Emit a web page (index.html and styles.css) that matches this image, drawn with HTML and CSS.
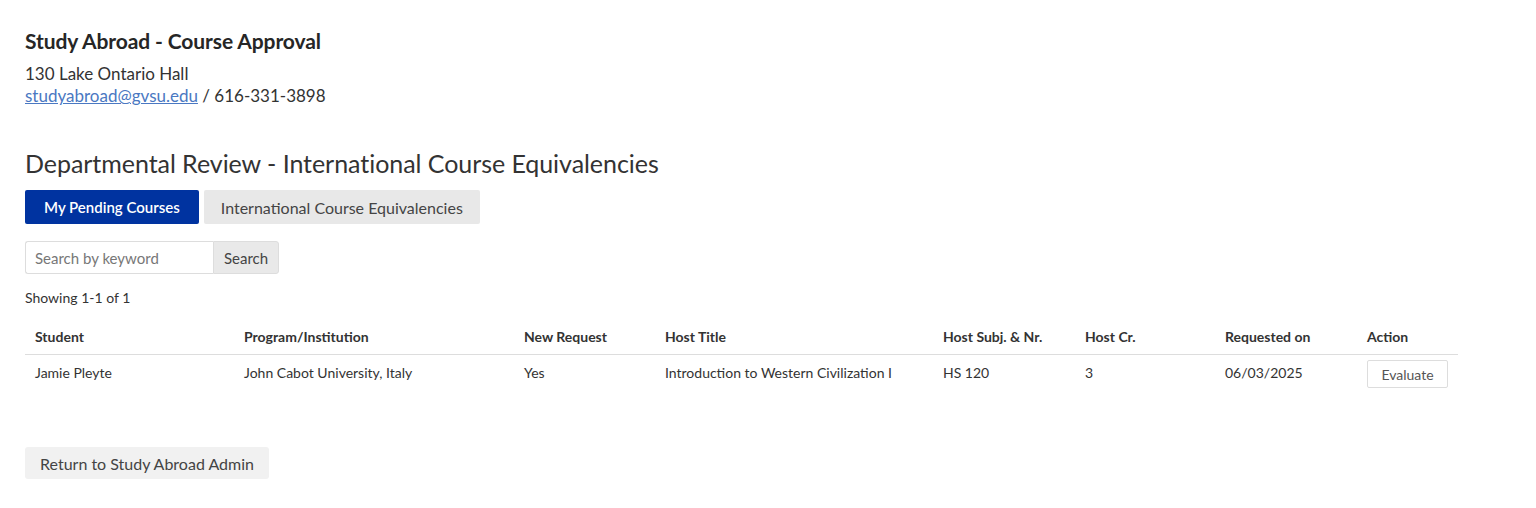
FILE: index.html
```html
<!DOCTYPE html>
<html lang="en">
<head>
<meta charset="utf-8">
<title>Study Abroad - Course Approval</title>
<link rel="stylesheet" href="styles.css">
</head>
<body>
<div class="page">
  <h1 class="title">Study Abroad - Course Approval</h1>
  <div class="address">
    <div>130 Lake Ontario Hall</div>
    <div><a href="#" class="link">studyabroad@gvsu.edu</a> / 616-331-3898</div>
  </div>
  <h2 class="heading">Departmental Review - International Course Equivalencies</h2>
  <div class="tabs">
    <a href="#" class="tab tab-active">My Pending Courses</a>
    <a href="#" class="tab">International Course Equivalencies</a>
  </div>
  <form class="search">
    <input class="search-input" type="text" placeholder="Search by keyword">
    <button class="search-btn" type="button">Search</button>
  </form>
  <div class="showing">Showing 1-1 of 1</div>
  <table class="grid">
    <colgroup>
      <col style="width:209px"><col style="width:280px"><col style="width:141px"><col style="width:278px">
      <col style="width:142px"><col style="width:140px"><col style="width:142px"><col style="width:101px">
    </colgroup>
    <thead>
      <tr>
        <th>Student</th><th>Program/Institution</th><th>New Request</th><th>Host Title</th>
        <th>Host Subj. &amp; Nr.</th><th>Host Cr.</th><th>Requested on</th><th>Action</th>
      </tr>
    </thead>
    <tbody>
      <tr>
        <td>Jamie Pleyte</td><td>John Cabot University, Italy</td><td>Yes</td><td>Introduction to Western Civilization I</td>
        <td>HS 120</td><td>3</td><td>06/03/2025</td><td class="action"><button class="eval-btn" type="button">Evaluate</button></td>
      </tr>
    </tbody>
  </table>
  <button class="return-btn" type="button">Return to Study Abroad Admin</button>
</div>
</body>
</html>
```

FILE: styles.css
```css
* { box-sizing: border-box; }
body {
  margin: 0;
  background: #fff;
  color: #333;
  font-family: "Source Sans Pro", Lato, "Liberation Sans", sans-serif;
}
.page {
  padding: 27px 25px 0 25px;
}
.title {
  margin: 0;
  font-size: 21px;
  line-height: 28px;
  font-weight: 700;
  color: #262626;
  letter-spacing: -0.1px;
}
.address {
  margin-top: 8px;
  font-size: 17px;
  line-height: 22px;
  color: #333;
}
.link {
  color: #4a78c2;
  text-decoration: underline;
}
.heading {
  margin: 40px 0 0 0;
  font-size: 25px;
  line-height: 32px;
  font-weight: 400;
  color: #333;
  letter-spacing: -0.05px;
}
.tabs {
  margin-top: 11px;
  display: flex;
  gap: 5px;
}
.tab {
  display: flex;
  align-items: center;
  height: 34px;
  padding: 0 17px;
  border-radius: 2px;
  background: #e8e8e8;
  color: #444;
  font-size: 16px;
  text-decoration: none;
}
.tab-active {
  background: #0033a0;
  color: #fff;
  font-weight: 600;
  font-size: 15px;
  padding: 0 19px;
}
.search {
  margin: 17px 0 0 0;
  display: flex;
  width: 254px;
  height: 33px;
}
.search-input {
  width: 188px;
  height: 33px;
  border: 1px solid #ddd;
  border-right: none;
  border-radius: 3px 0 0 3px;
  padding: 0 9px;
  font-family: inherit;
  font-size: 15px;
  color: #333;
}
.search-input::placeholder { color: #777; }
.search-btn {
  width: 66px;
  height: 33px;
  border: 1px solid #ddd;
  border-radius: 0 3px 3px 0;
  background: #e9e9e9;
  color: #444;
  font-family: inherit;
  font-size: 15px;
  padding: 0;
}
.showing {
  margin-top: 14px;
  font-size: 14px;
  line-height: 20px;
  color: #333;
}
.grid {
  margin-top: 11px;
  border-collapse: collapse;
  table-layout: fixed;
  width: 1433px;
  font-size: 14px;
  line-height: 20px;
}
.grid th {
  text-align: left;
  font-weight: 700;
  padding: 8px 10px 7px 10px;
  border-bottom: 1px solid #ddd;
  color: #333;
}
.grid td {
  text-align: left;
  vertical-align: top;
  padding: 8px 10px 12px 10px;
  color: #333;
}
.grid td.action { padding-top: 5px; padding-bottom: 7px; }
.eval-btn {
  display: block;
  height: 28px;
  width: 81px;
  border: 1px solid #ddd;
  border-radius: 2px;
  background: #fff;
  color: #555;
  font-family: inherit;
  font-size: 14px;
  padding: 0;
}
.return-btn {
  display: block;
  margin-top: 52px;
  height: 32px;
  padding: 0 15px;
  border: none;
  border-radius: 3px;
  background: #f1f1f1;
  color: #444;
  font-family: inherit;
  font-size: 16px;
}
```
